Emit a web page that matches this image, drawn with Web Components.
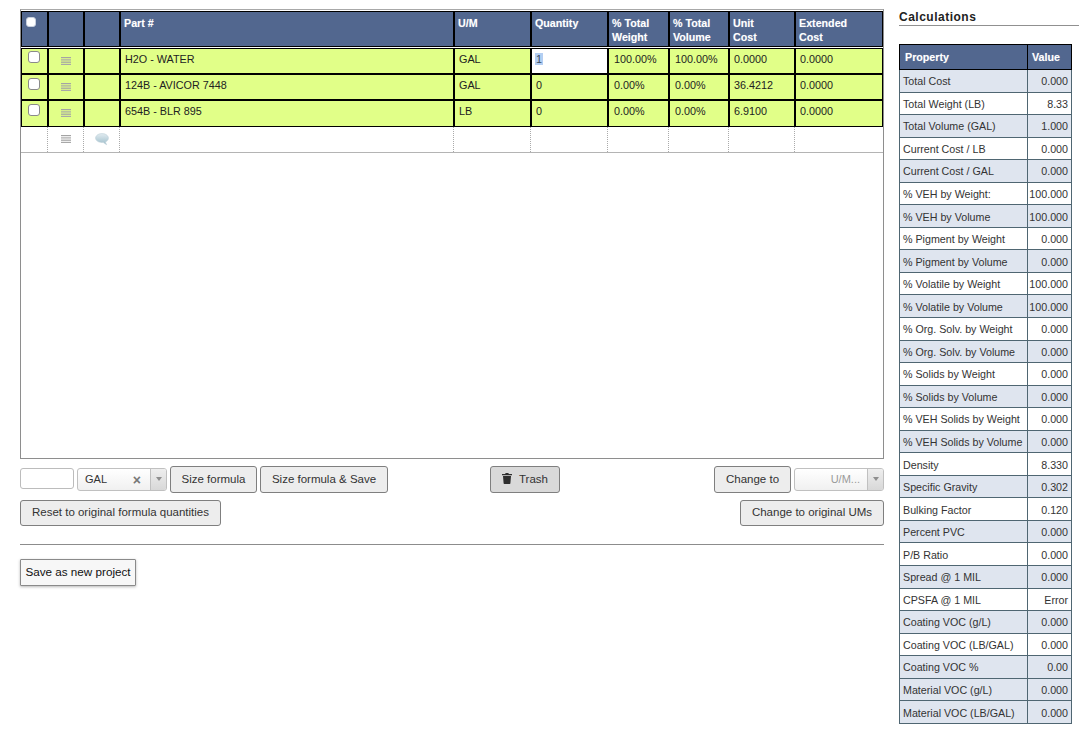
<!DOCTYPE html>
<html><head><meta charset="utf-8"><title>Formula</title>
<style>
html,body{margin:0;padding:0;background:#fff;font:11px "Liberation Sans",Arial,sans-serif;color:#222}
</style></head>
<body>
<x-app>
  <x-formula-grid></x-formula-grid>
  <x-toolbar></x-toolbar>
  <x-calc-panel slot="side"></x-calc-panel>
</x-app>
<script>
const COLS='27px 36px 36px 334px 77px 77px 61px 60px 66px 88px';
class XApp extends HTMLElement{constructor(){super();this.attachShadow({mode:'open'}).innerHTML=`<style>
:host{display:flex;width:1091px;height:729px;box-sizing:border-box;overflow:hidden}
main{width:864px;margin:9px 0 0 20px;flex:none}
aside{width:180px;margin:9px 0 0 15px;flex:none}
</style><main><slot></slot></main><aside><slot name="side"></slot></aside>`}}
customElements.define('x-app',XApp);

class XHamburger extends HTMLElement{constructor(){super();this.attachShadow({mode:'open'}).innerHTML=`<style>
:host{display:block;width:10px;height:8px}svg{display:block}</style>
<svg width="10" height="8" viewBox="0 0 10 8"><rect y="0" width="10" height="1.2" fill="#a4a4a4"/><rect y="2.3" width="10" height="1.2" fill="#a8a8a8"/><rect y="4.6" width="10" height="1.2" fill="#a4a4a4"/><rect y="6.8" width="10" height="1.2" fill="#a8a8a8"/></svg>`}}
customElements.define('x-hamburger',XHamburger);

class XBubble extends HTMLElement{constructor(){super();this.attachShadow({mode:'open'}).innerHTML=`<style>
:host{display:block;width:14px;height:13px}svg{display:block}</style>
<svg width="14" height="13" viewBox="0 0 14 13"><defs><linearGradient id="g" x1="0" y1="0" x2="0" y2="1"><stop offset="0" stop-color="#e2ecf1"/><stop offset="1" stop-color="#9dbdca"/></linearGradient></defs>
<path d="M7 .6C10.600 .6 13.400 2.600 13.400 5.100c0 1.700-1.200 3.100-3 3.900l1.200 2.700-3.600-2.400C7.700 9.400 7.300 9.500 7 9.500 3.400 9.500 .6 7.500 .6 5.100 .6 2.600 3.400 .6 7 .6Z" fill="url(#g)" stroke="#bdd0d8" stroke-width=".6"/></svg>`}}
customElements.define('x-bubble',XBubble);

class XGridRow extends HTMLElement{
  connectedCallback(){
    if(this.shadowRoot)return;
    const kind=this.getAttribute('kind');const d=JSON.parse(this.getAttribute('data')||'[]');
    const r=this.attachShadow({mode:'open'});
    let cells='';
    if(kind==='head'){
      cells=`<div class="c k"><input type="checkbox" class="hk" aria-label="all"></div><div class="c"></div><div class="c"></div>`+
        d.map(t=>`<div class="c">${t}</div>`).join('');
    }else if(kind==='row'){
      cells=`<div class="c k"><input type="checkbox" aria-label="row"></div><div class="c m"><x-hamburger></x-hamburger></div><div class="c"></div>`+
        d.map((t,i)=>i===2&&this.hasAttribute('editing')?`<div class="c ed"><span class="sel">${t}</span></div>`:`<div class="c${i===3||i===4?' p':''}">${t}</div>`).join('');
    }else{
      cells=`<div class="c"></div><div class="c m"><x-hamburger></x-hamburger></div><div class="c b"><x-bubble></x-bubble></div>`+
        Array(7).fill('<div class="c"></div>').join('');
    }
    r.innerHTML=`<style>
:host{display:grid;grid-template-columns:${COLS};box-sizing:border-box}
:host([kind=head]){height:37px}
:host([kind=row]){height:26px}
:host([last]){height:27px}
:host([kind=blank]){height:25.500px;border-bottom:1px solid #b4b4b4}
.c{box-sizing:border-box;min-width:0;overflow:hidden}
:host([kind=head]) .c{background:#52678f;border:1px solid #000;color:#fff;font:bold 10.700px/14px "Liberation Sans",Arial,sans-serif;padding:4px 3px 0 3px;text-shadow:0 0 1px rgba(255,255,255,.35);height:36px}
:host([kind=row]) .c{background:#e1ff88;border:1px solid #000;padding:3px 4px 0 4px;font:10.800px/14px "Liberation Sans",Arial,sans-serif;color:#222}
:host([kind=row]) .c.p{padding-left:5px}
:host([kind=blank]) .c{border-right:1px dotted #aaa}
:host([kind=blank]) .c:last-child{border-right:0}
.c.m{display:flex;justify-content:center;padding-top:8px}
:host([kind=row]) .c.m{padding-top:8px}
.b{display:flex;justify-content:center;padding-top:6px}
:host([kind=row]) .ed{background:#fff}
.sel{background:#b4cef2;color:#3a4a60;padding:0 1px;margin-left:-1px}
input{appearance:none;-webkit-appearance:none;box-sizing:border-box;width:11.500px;height:11.500px;background:#fff;border:1px solid #8a8a8a;border-radius:3px;display:block;margin:0}
.hk{width:10px;height:10px;border-color:#c8cfdd}
:host([kind=head]) .c.k{padding:5px 0 0 4px}
:host([kind=row]) .c.k{padding:3px 0 0 6px}
:host([editing]) .c.k{padding-top:2px}
</style>${cells}`;
  }
}
customElements.define('x-grid-row',XGridRow);

class XFormulaGrid extends HTMLElement{constructor(){super();
  const rows=[
   ['H2O - WATER','GAL','1','100.00%','100.00%','0.0000','0.0000'],
   ['124B - AVICOR 7448','GAL','0','0.00%','0.00%','36.4212','0.0000'],
   ['654B - BLR 895','LB','0','0.00%','0.00%','6.9100','0.0000']];
  const s=this.attachShadow({mode:'open'});
  s.innerHTML=`<style>
:host{display:block;width:864px;height:450px;box-sizing:border-box;border:1px solid #8e8e8e;border-top:1px solid #a8a8a8;padding-top:1px;overflow:hidden}
</style>
<x-grid-row kind="head" data='${JSON.stringify(['Part #','U/M','Quantity','% Total<br>Weight','% Total<br>Volume','Unit<br>Cost','Extended<br>Cost'])}'></x-grid-row>
${rows.map((r,i)=>`<x-grid-row kind="row" ${i===0?'editing':''} ${i===2?'last':''} data='${JSON.stringify(r)}'></x-grid-row>`).join('')}
<x-grid-row kind="blank"></x-grid-row>`;
}}
customElements.define('x-formula-grid',XFormulaGrid);

class XButton extends HTMLElement{constructor(){super();this.attachShadow({mode:'open'}).innerHTML=`<style>
:host{display:inline-flex;align-items:center;justify-content:center;box-sizing:border-box;height:27px;padding-bottom:2px;border:1px solid #7f7f7f;border-radius:3px;background:#ededed;color:#333;font:11.500px "Liberation Sans",Arial,sans-serif;white-space:nowrap;flex:none}
:host([pressed]){background:#d9d9d9}
:host([plain]){background:#f7f7f7;color:#111;font-size:11.700px;border-radius:1px;border-color:#8a8a8a;box-shadow:0 1px 3px rgba(0,0,0,.28)}
</style><slot></slot>`}}
customElements.define('x-button',XButton);

class XCombo extends HTMLElement{connectedCallback(){if(this.shadowRoot)return;
  const clear=this.hasAttribute('clear');
  this.attachShadow({mode:'open'}).innerHTML=`<style>
:host{display:flex;box-sizing:border-box;height:23px;margin-bottom:1px;border:1px solid #c0c0c0;border-radius:3px;background:linear-gradient(#fff,#f0f0f0);font:11px "Liberation Sans",Arial,sans-serif;color:#333;flex:none;overflow:hidden}
.t{flex:1;display:flex;align-items:center;padding:0 0 1px 7px;min-width:0}
:host([placeholder]) .t{justify-content:flex-end;color:#9a9a9a;padding-right:7px}
.x{margin-left:auto;color:#777;font:bold 14px/14px "Liberation Sans",Arial,sans-serif;padding:3px 9px 0 0}
.a{flex:none;border-left:1px solid #c0c0c0;background:linear-gradient(#eee,#d8d8d8);display:flex;align-items:center;justify-content:center;box-sizing:border-box;width:16px}
.a:after{content:"";border:3px solid transparent;border-top:4px solid #8e8e8e;border-bottom:0}
</style><div class="t"><slot></slot>${clear?'<span class="x">×</span>':''}</div><div class="a"></div>`}}
customElements.define('x-combo',XCombo);

class XToolbar extends HTMLElement{constructor(){super();this.attachShadow({mode:'open'}).innerHTML=`<style>
:host{display:block;width:864px}
.r1{display:flex;align-items:center;margin-top:7px;height:27px}
.r2{display:flex;justify-content:space-between;margin-top:7px}
.num{box-sizing:border-box;width:54px;height:21px;border:1px solid #bcbcbc;border-radius:3px;background:#fff;margin:0 3px 2px 0;padding:0;flex:none}
hr{border:0;border-top:1px solid #8c8c8c;margin:18px 0 14px;height:0}
.trash{gap:7px;margin-left:102px}
.right{margin-left:auto;display:flex;align-items:center;gap:3px}
svg{display:block}
</style>
<div class="r1">
  <input class="num" aria-label="size">
  <x-combo clear style="width:90px;margin-right:3px">GAL</x-combo>
  <x-button style="width:87px;margin-right:3px">Size formula</x-button>
  <x-button style="width:128px">Size formula &amp; Save</x-button>
  <x-button pressed class="trash" style="width:70px">
    <svg width="10" height="11" viewBox="0 0 10 11" aria-hidden="true"><path d="M3.600 0h2.800l.4 1H10v1.300H0V1h3.200ZM1 3h8l-.6 7.300c0 .4-.3.700-.7.700H2.300c-.4 0-.7-.3-.7-.7Z" fill="#2e2e2e"/></svg>Trash
  </x-button>
  <div class="right">
    <x-button style="width:77px">Change to</x-button>
    <x-combo placeholder style="width:90px">U/M...</x-combo>
  </div>
</div>
<div class="r2">
  <x-button style="width:201px;height:26px">Reset to original formula quantities</x-button>
  <x-button style="width:144px;height:26px">Change to original UMs</x-button>
</div>
<hr>
<x-button plain style="width:116px">Save as new project</x-button>`}}
customElements.define('x-toolbar',XToolbar);

class XCalcPanel extends HTMLElement{constructor(){super();
 const data=[['Total Cost','0.000',1],['Total Weight (LB)','8.33',0],['Total Volume (GAL)','1.000',1],['Current Cost / LB','0.000',0],['Current Cost / GAL','0.000',1],['% VEH by Weight:','100.000',0],['% VEH by Volume','100.000',1],['% Pigment by Weight','0.000',0],['% Pigment by Volume','0.000',1],['% Volatile by Weight','100.000',0],['% Volatile by Volume','100.000',1],['% Org. Solv. by Weight','0.000',0],['% Org. Solv. by Volume','0.000',1],['% Solids by Weight','0.000',0],['% Solids by Volume','0.000',1],['% VEH Solids by Weight','0.000',0],['% VEH Solids by Volume','0.000',1],['Density','8.330',0],['Specific Gravity','0.302',1],['Bulking Factor','0.120',0],['Percent PVC','0.000',1],['P/B Ratio','0.000',0],['Spread @ 1 MIL','0.000',1],['CPSFA @ 1 MIL','Error',0],['Coating VOC (g/L)','0.000',1],['Coating VOC (LB/GAL)','0.000',0],['Coating VOC %','0.00',1],['Material VOC (g/L)','0.000',1],['Material VOC (LB/GAL)','0.000',1]];
 this.attachShadow({mode:'open'}).innerHTML=`<style>
:host{display:block;width:180px}
h2{margin:0;font:bold 12px/17px "Liberation Sans",Arial,sans-serif;letter-spacing:.5px;color:#222;height:16px;border-bottom:1px solid #909090}
.t{margin-top:18px;width:173px;box-sizing:border-box;display:grid;grid-template-columns:128px 45px;grid-template-rows:26px repeat(29,22.552px)}
.t>div{box-sizing:border-box;font:10.700px/14px "Liberation Sans",Arial,sans-serif;color:#333;display:flex;align-items:center;padding:1px 0 0 3px;border-left:1px solid #4f6672;border-bottom:1px solid #4f6672;white-space:nowrap;background:#fff}
.t>div.v{justify-content:flex-end;border-right:1px solid #4f6672;padding-right:3px}
.t>div.h{background:#52678f;color:#fff;font-weight:bold;border-color:#000;border-top:1px solid #000;padding:0 0 0 5px;text-shadow:0 0 1px rgba(255,255,255,.35)}
.t>div.h.v{justify-content:flex-start;padding-left:4px}
.t>div.a{background:#dfe5ef}
</style>
<h2>Calculations</h2>
<div class="t"><div class="h">Property</div><div class="h v">Value</div>
${data.map(([k,v,a])=>`<div class="${a?'a':''}">${k}</div><div class="v ${a?'a':''}">${v}</div>`).join('')}
</div>`}}
customElements.define('x-calc-panel',XCalcPanel);
</script>
</body></html>
